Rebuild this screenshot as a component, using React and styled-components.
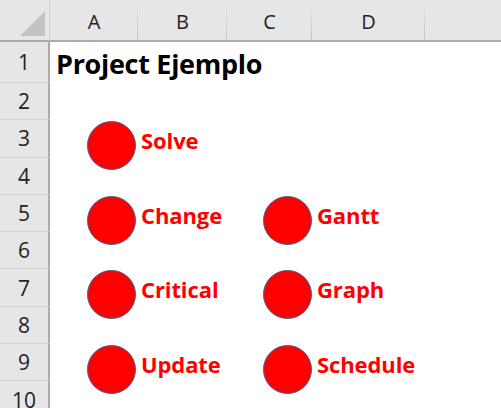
import React from "react"
import styled, { createGlobalStyle } from "styled-components"

const GlobalStyle = createGlobalStyle`
  html, body {
    margin: 0;
    padding: 0;
    background: #fff;
    overflow: hidden;
  }
`

const COLS = ["A", "B", "C", "D", ""]
const ROWS = [1, 2, 3, 4, 5, 6, 7, 8, 9, 10]

const BUTTONS = [
  { label: "Solve", x: 87, y: 120 },
  { label: "Change", x: 87, y: 195 },
  { label: "Critical", x: 87, y: 269 },
  { label: "Update", x: 87, y: 344 },
  { label: "Gantt", x: 263, y: 195 },
  { label: "Graph", x: 263, y: 269 },
  { label: "Schedule", x: 263, y: 344 },
]

const Sheet = styled.div`
  position: relative;
  width: 501px;
  height: 408px;
  overflow: hidden;
  display: grid;
  grid-template-columns: 50px 88px 89px 85px 113px 1fr;
  grid-template-rows: 42px 41px repeat(9, 37.3px);
  font-family: "Open Sans", "Noto Sans", sans-serif;
`

const Corner = styled.div`
  position: relative;
  background: #e6e6e6;
  border-bottom: 2px solid #ababab;
  border-right: 1px solid #d0d0d0;

  &::after {
    content: "";
    position: absolute;
    right: 4px;
    bottom: 4px;
    width: 0;
    height: 0;
    border-left: 25px solid transparent;
    border-bottom: 25px solid #c2c2c2;
  }
`

const ColHead = styled.div`
  position: relative;
  background: #e6e6e6;
  border-bottom: 2px solid #ababab;
  display: flex;
  align-items: center;
  justify-content: center;
  padding-top: 2px;
  font-size: 20px;
  color: #222;

  &::after {
    content: "";
    position: absolute;
    right: 0;
    top: 7px;
    bottom: 0;
    width: 1px;
    background: linear-gradient(#e0e0e0, #c4c4c4);
    display: ${({ $last }) => ($last ? "none" : "block")};
  }
`

const RowHead = styled.div`
  grid-column: 1;
  background: #e6e6e6;
  border-right: 2px solid #ababab;
  border-bottom: 1px solid #d2d2d2;
  display: flex;
  align-items: center;
  justify-content: center;
  font-size: 21px;
  color: #222;
`

const Cell = styled.div`
  grid-column: ${({ $col }) => $col};
  grid-row: ${({ $row }) => $row};
  background: #fff;
`

const Title = styled.div`
  grid-column: 2 / 7;
  grid-row: 2;
  display: flex;
  align-items: center;
  padding-left: 6px;
  padding-top: 2px;
  white-space: nowrap;
  font-family: "Open Sans", "Noto Sans", sans-serif;
  font-weight: 700;
  font-size: 27px;
  letter-spacing: -0.3px;
  color: #000;
`

const Shape = styled.div`
  position: absolute;
  left: ${({ $x }) => $x}px;
  top: ${({ $y }) => $y}px;
  display: flex;
  align-items: center;
  gap: 5px;
  height: 50px;
`

const Circle = styled.div`
  width: 47px;
  height: 47px;
  border-radius: 50%;
  background: #ff0000;
  border: 1.5px solid #46608f;
  flex: none;
`

const Label = styled.span`
  margin-top: -10px;
  font-family: "Open Sans", "Noto Sans", sans-serif;
  font-weight: 700;
  font-size: 22px;
  letter-spacing: -0.1px;
  color: #ff0000;
`

export default function App() {
  return (
    <>
      <GlobalStyle />
      <Sheet>
        <Corner />
        {COLS.map((c, i) => (
          <ColHead key={i} $last={i === COLS.length - 1}>
            {c}
          </ColHead>
        ))}
        {ROWS.map((r) => (
          <React.Fragment key={r}>
            <RowHead style={{ gridRow: r + 1 }}>{r}</RowHead>
            {r !== 1 && <Cell $col="2 / 7" $row={r + 1} />}
          </React.Fragment>
        ))}
        <Title>Project Ejemplo</Title>
        {BUTTONS.map((b) => (
          <Shape key={b.label} $x={b.x} $y={b.y}>
            <Circle />
            <Label>{b.label}</Label>
          </Shape>
        ))}
      </Sheet>
    </>
  )
}
